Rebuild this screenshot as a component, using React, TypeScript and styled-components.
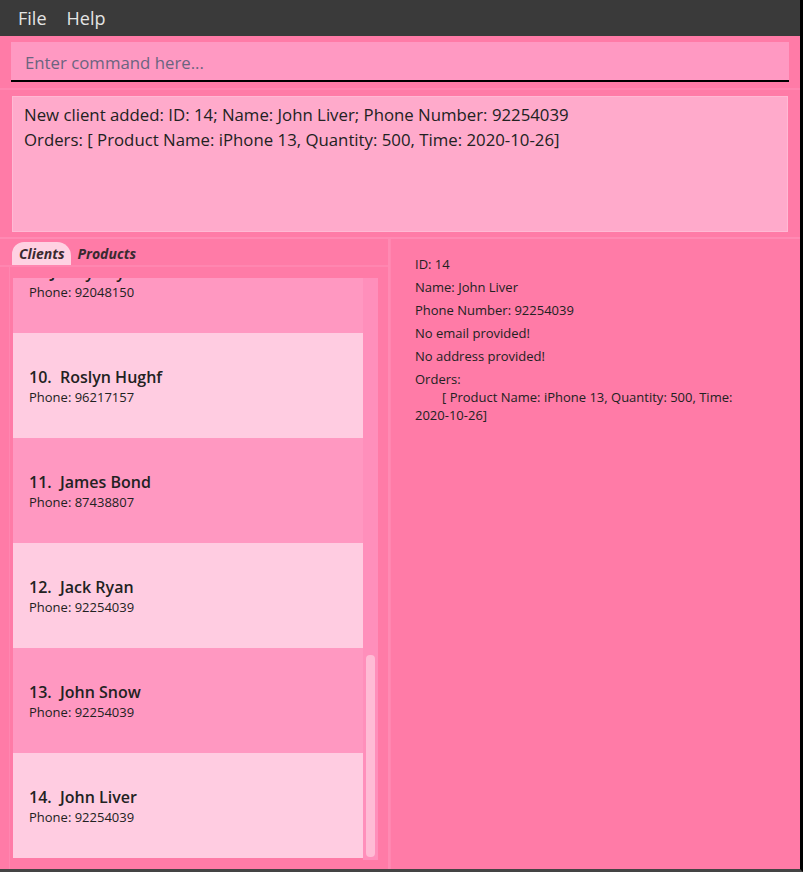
import React from "react";
import styled, { createGlobalStyle } from "styled-components";

const GlobalStyle = createGlobalStyle`
  html, body {
    margin: 0;
    padding: 0;
    background: #3c3c3c;
  }
`;

type Client = { id: number; name: string; phone: string };

const clients: Client[] = [
  { id: 9, name: "Jenny Tay", phone: "92048150" },
  { id: 10, name: "Roslyn Hughf", phone: "96217157" },
  { id: 11, name: "James Bond", phone: "87438807" },
  { id: 12, name: "Jack Ryan", phone: "92254039" },
  { id: 13, name: "John Snow", phone: "92254039" },
  { id: 14, name: "John Liver", phone: "92254039" },
];

const details = [
  "ID: 14",
  "Name: John Liver",
  "Phone Number: 92254039",
  "No email provided!",
  "No address provided!",
];

function App() {
  return (
    <>
      <GlobalStyle />
      <Window>
        <MenuBar>
          <MenuItem>File</MenuItem>
          <MenuItem>Help</MenuItem>
        </MenuBar>
        <CommandPane>
          <CommandInput placeholder="Enter command here..." />
        </CommandPane>
        <ResultPane>
          <ResultBox>
            <div>New client added: ID: 14; Name: John Liver; Phone Number: 92254039</div>
            <div>Orders: [ Product Name: iPhone 13, Quantity: 500, Time: 2020-10-26]</div>
          </ResultBox>
        </ResultPane>
        <Split>
          <LeftPane>
            <Tabs>
              <Tab $active>Clients</Tab>
              <Tab>Products</Tab>
            </Tabs>
            <ListFrame>
              <ListViewport>
                <ListInner $offset={50}>
                  {clients.map((c, i) => (
                    <ClientCard key={c.id} $light={i % 2 === 1}>
                      <ClientName>
                        {c.id}.&nbsp;&nbsp;{c.name}
                      </ClientName>
                      <ClientPhone>Phone: {c.phone}</ClientPhone>
                    </ClientCard>
                  ))}
                </ListInner>
              </ListViewport>
              <ScrollTrack>
                <ScrollThumb />
              </ScrollTrack>
            </ListFrame>
          </LeftPane>
          <DetailPane>
            {details.map((d) => (
              <DetailLine key={d}>{d}</DetailLine>
            ))}
            <DetailLine>
              Orders:
              <br />
              <Indent />[ Product Name: iPhone 13, Quantity: 500, Time:{" "}
              <NoWrap>2020-10-26]</NoWrap>
            </DetailLine>
          </DetailPane>
        </Split>
      </Window>
    </>
  );
}

export default App;

const Window = styled.div`
  width: 800px;
  height: 869px;
  border-right: 3px solid #000;
  border-bottom: 3px solid #444;
  background: #ff7ba7;
  display: flex;
  flex-direction: column;
  font-family: "Open Sans", "Liberation Sans", sans-serif;
  color: #222;
  overflow: hidden;
`;

const MenuBar = styled.div`
  height: 36px;
  flex-shrink: 0;
  background: #3a3a3a;
  display: flex;
  align-items: center;
  padding-left: 18px;
  gap: 20px;
`;

const MenuItem = styled.span`
  font-size: 18px;
  color: #e4e4e4;
`;

const CommandPane = styled.div`
  padding: 6px 11px 6px 11px;
  border-bottom: 2px solid #ff86b0;
`;

const CommandInput = styled.input`
  display: block;
  box-sizing: border-box;
  width: 100%;
  height: 40px;
  border: none;
  border-bottom: 2px solid #000;
  background: #ff99c2;
  padding: 3px 14px 0 14px;
  font-family: "Open Sans", "Liberation Sans", sans-serif;
  font-size: 16.8px;
  outline: none;
  &::placeholder {
    color: #6b6480;
  }
`;

const ResultPane = styled.div`
  padding: 6px 12px 5px 12px;
  border-bottom: 2px solid #ff8ab3;
`;

const ResultBox = styled.div`
  box-sizing: border-box;
  height: 136px;
  background: #ffaacb;
  border: 1px solid #ffb9d4;
  padding: 5px 11px 6px 11px;
  font-size: 16.8px;
  line-height: 25px;
  color: #222;
`;

const Split = styled.div`
  flex: 1;
  display: flex;
  min-height: 0;
`;

const LeftPane = styled.div`
  width: 388px;
  flex-shrink: 0;
  border-right: 2px solid #ff8ab3;
  display: flex;
  flex-direction: column;
`;

const Tabs = styled.div`
  display: flex;
  align-items: flex-end;
  height: 26px;
  padding-left: 12px;
  border-bottom: 2px solid #ff86b0;
`;

const Tab = styled.div<{ $active?: boolean }>`
  font-size: 14px;
  font-weight: 700;
  font-style: italic;
  line-height: 23px;
  padding: 0 6px 0 7px;
  color: #3a2a30;
  background: ${(p) => (p.$active ? "#ffd1e2" : "transparent")};
  border-radius: 12px 14px 0 0;
`;

const ListFrame = styled.div`
  flex: 1;
  min-height: 0;
  display: flex;
  padding: 11px 0 9px 3px;
  margin-left: 9px;
  margin-right: 10px;
  border-left: 1px solid #ff86b0;
`;

const ListViewport = styled.div`
  width: 350px;
  overflow: hidden;
`;

const ListInner = styled.div<{ $offset: number }>`
  margin-top: -${(p) => p.$offset}px;
`;

const ClientCard = styled.div<{ $light: boolean }>`
  height: 105px;
  box-sizing: border-box;
  background: ${(p) => (p.$light ? "#ffcce1" : "#ff98c1")};
  padding: 1px 0 0 16px;
  display: flex;
  flex-direction: column;
  justify-content: center;
`;

const ClientName = styled.div`
  font-size: 16px;
  font-weight: 600;
  line-height: 21px;
  color: #222;
`;

const ClientPhone = styled.div`
  font-size: 13px;
  line-height: 18px;
  color: #222;
`;

const ScrollTrack = styled.div`
  width: 15px;
  background: #ff8fbb;
  display: flex;
  flex-direction: column;
  justify-content: flex-end;
  align-items: center;
  padding-bottom: 3px;
  box-sizing: border-box;
`;

const ScrollThumb = styled.div`
  width: 9px;
  height: 202px;
  border-radius: 4px;
  background: #ffbbd5;
`;

const DetailPane = styled.div`
  flex: 1;
  padding: 16px 25px 0 24px;
  border-left: 1px solid #ff86b0;
  display: flex;
  flex-direction: column;
  gap: 5px;
`;

const DetailLine = styled.div`
  font-size: 13px;
  line-height: 18px;
  color: #222;
`;

const Indent = styled.span`
  display: inline-block;
  width: 27px;
`;

const NoWrap = styled.span`
  white-space: nowrap;
`;
